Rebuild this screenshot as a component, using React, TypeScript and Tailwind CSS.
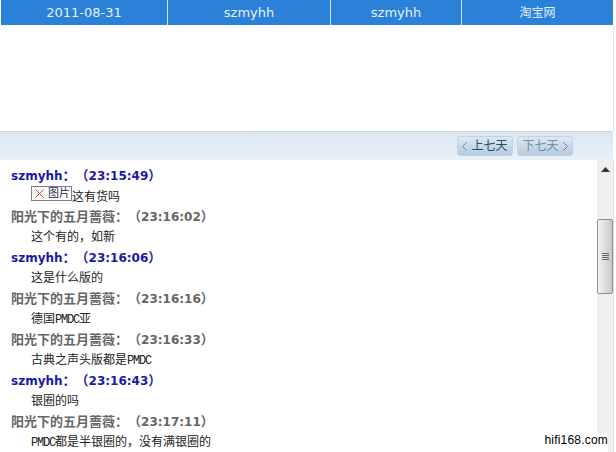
const cjk = "font-['DejaVu_Sans','Noto_Sans_CJK_SC',sans-serif]";

const messages = [
  { name: "szmyhh", time: "23:15:49", me: true, text: "这有货吗", pic: true },
  { name: "阳光下的五月蔷薇", time: "23:16:02", me: false, text: "这个有的，如新" },
  { name: "szmyhh", time: "23:16:06", me: true, text: "这是什么版的" },
  { name: "阳光下的五月蔷薇", time: "23:16:16", me: false, text: "德国PMDC亚" },
  { name: "阳光下的五月蔷薇", time: "23:16:33", me: false, text: "古典之声头版都是PMDC" },
  { name: "szmyhh", time: "23:16:43", me: true, text: "银圈的吗" },
  { name: "阳光下的五月蔷薇", time: "23:17:11", me: false, text: "PMDC都是半银圈的，没有满银圈的" },
];

// PMDC is much narrower in the picture than the chinese around it
const MsgText = ({ text }: { text: string }) => (
  <span>
    {text.split(/(PMDC)/).map((part, i) =>
      part === "PMDC" ? (
        <span key={i} className="font-['Liberation_Mono',monospace] text-[12px] tracking-[-1.2px]">
          {part}
        </span>
      ) : (
        <span key={i}>{part}</span>
      )
    )}
  </span>
);

const Chevron = ({ left }: { left?: boolean }) => (
  <svg width="5" height="9" viewBox="0 0 5 9" fill="none" stroke="#6f8596" strokeWidth="1">
    <path d={left ? "M4.5 .5L.5 4.5l4 4" : "M.5 .5l4 4-4 4"} />
  </svg>
);

const NavButton = ({ label, disabled }: { label: string; disabled?: boolean }) => (
  <button
    className={
      "h-[20px] w-[56px] flex items-center justify-center gap-[4px] rounded-[3px] border border-[#c3d3e2] bg-gradient-to-b from-[#dde8f2] to-[#b5cbdf] text-[12px] " +
      (disabled ? "text-[#7d8d99]" : "text-[#2c4a60]")
    }
  >
    {!disabled && <Chevron left />}
    {label}
    {disabled && <Chevron />}
  </button>
);

export default function App() {
  return (
    <div className={"relative w-[616px] h-[452px] overflow-hidden bg-white " + cjk}>
      <div className="ml-[1px] mr-[3px] flex h-[25px] bg-[#2b80d8] text-[13px] text-[#e4f0fb]">
        <div className="w-[167px] flex items-center justify-center border-r border-[#cfe2f5]">2011-08-31</div>
        <div className="w-[163px] flex items-center justify-center border-r border-[#cfe2f5]">szmyhh</div>
        <div className="w-[131px] flex items-center justify-center border-r border-[#cfe2f5]">szmyhh</div>
        <div className="flex-1 flex items-center justify-center text-[12px]">淘宝网</div>
      </div>
      <div className="h-[106px] mr-[2px] border-r border-[#dfe6ed]" />
      <div className="h-[29px] mr-[3px] flex items-center justify-end gap-[4px] pr-[40px] border-t border-[#c9d6e2] bg-gradient-to-b from-[#dbe7f2] to-[#e8f0f8]">
        <NavButton label="上七天" />
        <NavButton label="下七天" disabled />
      </div>
      <div className="flex h-[292px]">
        <div className="w-[597px] pt-[7px] pl-[11px]">
          {messages.map((m) => (
            <div key={m.time} className="h-[41px]">
              <div className={"h-[17px] leading-[17px] text-[13px] font-bold whitespace-nowrap [text-spacing-trim:space-all] " + (m.me ? "text-[#1a1aa6]" : "text-[#666666]")}>
                <span className={m.me ? "text-[12px]" : ""}>{m.name}</span>：（<span className="text-[12px]">{m.time}</span>）
              </div>
              <div className={"flex items-center h-[20px] pl-[20px] text-[12px] text-[#222222] " + (m.pic ? "mt-[3px]" : "mt-[2px]")}>
                {m.pic && (
                  <span className="flex items-center h-[15px] w-[41px] -mt-[7px] pl-[3px] border border-[#808080] text-[11px] leading-none text-[#1c2a4a]">
                    <svg width="9" height="9" viewBox="0 0 9 9" stroke="#c2452d" className="mr-[4px]">
                      <path d="M.5 .5l8 8M8.5 .5l-8 8" />
                    </svg>
                    图片
                  </span>
                )}
                <MsgText text={m.text} />
              </div>
            </div>
          ))}
        </div>
        <div className="w-[17px] bg-[#f0f0f0] border-r border-[#dfe3e8] flex flex-col items-center">
          <svg width="9" height="5" viewBox="0 0 9 5" className="mt-[7px]">
            <path d="M4.5 0L9 5H0z" fill="#333333" />
          </svg>
          <div className="mt-[47px] w-[16px] h-[75px] rounded-[2px] border border-[#8f8f8f] bg-gradient-to-r from-[#f4f4f4] to-[#c8c8c8] flex flex-col items-center justify-center gap-[1px]">
            <div className="w-[7px] h-[1px] bg-[#666666]" />
            <div className="w-[7px] h-[1px] bg-[#666666]" />
            <div className="w-[7px] h-[1px] bg-[#666666]" />
            <div className="w-[7px] h-[1px] bg-[#666666]" />
          </div>
        </div>
      </div>
      <div className="absolute right-[8px] bottom-0 h-[19px] bg-white pl-[1px] text-[12px] leading-[14px] tracking-[0.2px] text-black font-['Liberation_Sans',sans-serif]">
        hifi168.com
      </div>
    </div>
  );
}
